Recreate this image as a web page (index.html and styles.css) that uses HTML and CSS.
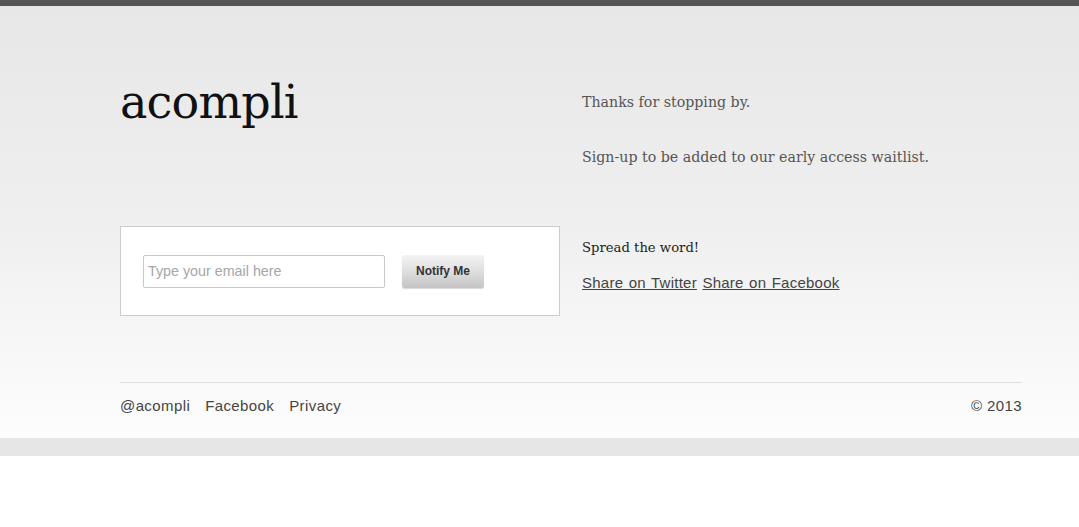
FILE: index.html
```html
<!DOCTYPE html>
<html>
<head>
<meta charset="utf-8">
<link rel="stylesheet" href="styles.css">
</head>
<body>
<div class="topbar"></div>
<div class="main">
  <div class="wrap">
    <div class="row row-top">
      <div class="col-left">
        <h1 class="logo">acompli</h1>
      </div>
      <div class="col-right intro">
        <p>Thanks for stopping by.</p>
        <p>Sign-up to be added to our early access waitlist.</p>
      </div>
    </div>
    <div class="row row-mid">
      <div class="col-left">
        <form class="signup">
          <input class="email" type="text" placeholder="Type your email here">
          <button class="notify" type="button">Notify Me</button>
        </form>
      </div>
      <div class="col-right share">
        <p class="spread">Spread the word!</p>
        <p class="links"><a href="#">Share on Twitter</a> <a href="#">Share on Facebook</a></p>
      </div>
    </div>
    <div class="footer">
      <nav class="foot-links">
        <a href="#">@acompli</a>
        <a href="#">Facebook</a>
        <a href="#">Privacy</a>
      </nav>
      <span class="copy">© 2013</span>
    </div>
  </div>
</div>
<div class="band"></div>
</body>
</html>
```

FILE: styles.css
```css
html, body {
  margin: 0;
  padding: 0;
  background: #fff;
}
body {
  font-family: "Liberation Sans", Arial, sans-serif;
}
.topbar {
  height: 6px;
  background: #555;
}
.main {
  height: 432px;
  background: linear-gradient(to bottom, #e7e7e7 0%, #efefef 50%, #fdfdfd 100%);
}
.wrap {
  width: 902px;
  margin: 0 auto 0 120px;
}
.row {
  display: flex;
}
.col-left {
  width: 440px;
  flex: none;
}
.col-right {
  margin-left: 22px;
}
.row-top {
  height: 220px;
}
.logo {
  margin: 0;
  padding-top: 66px;
  font-family: "DejaVu Serif", Georgia, serif;
  font-weight: normal;
  font-size: 46px;
  line-height: 60px;
  color: #111;
  letter-spacing: -0.8px;
}
.intro {
  padding-top: 86px;
  font-family: "DejaVu Serif", Georgia, serif;
  color: #555;
  font-size: 14.2px;
}
.intro p {
  margin: 0 0 35px;
  line-height: 20px;
}
.signup {
  box-sizing: border-box;
  width: 440px;
  height: 90px;
  border: 1px solid #ccc;
  background: #fff;
  display: flex;
  align-items: center;
  padding: 0 0 0 22px;
  gap: 17px;
}
.email {
  box-sizing: border-box;
  width: 242px;
  height: 33px;
  border: 1px solid #c8c8c8;
  border-radius: 2px;
  padding: 0 4px;
  font-family: "Liberation Sans", Arial, sans-serif;
  font-size: 14.3px;
  color: #333;
  outline: none;
}
.email::placeholder {
  color: #a6a6a6;
}
.notify {
  width: 82px;
  height: 33px;
  border: none;
  border-radius: 2px;
  background: linear-gradient(to bottom, #f4f4f4 0%, #dedede 50%, #c4c4c4 100%);
  box-shadow: 0 1px 1px rgba(0,0,0,0.15);
  font-family: "Liberation Sans", Arial, sans-serif;
  font-weight: bold;
  font-size: 12px;
  color: #333;
  padding: 0;
}
.share {
  padding-top: 12px;
}
.spread {
  margin: 0;
  font-family: "DejaVu Serif", Georgia, serif;
  font-size: 13.2px;
  line-height: 20px;
  color: #222;
}
.links {
  margin: 15px 0 0;
  font-size: 15px;
  letter-spacing: 0.25px;
  word-spacing: 1px;
  line-height: 20px;
}
.links a {
  color: #444;
  text-decoration: underline;
}
.footer {
  margin-top: 66px;
  border-top: 1px solid #ddd;
  display: flex;
  justify-content: space-between;
  padding-top: 14px;
  font-size: 15px;
  letter-spacing: 0.4px;
  line-height: 18px;
  color: #444;
}
.foot-links {
  display: flex;
  gap: 15px;
}
.foot-links a {
  color: #444;
  text-decoration: none;
}
.band {
  height: 18px;
  background: #e6e6e6;
}
```
